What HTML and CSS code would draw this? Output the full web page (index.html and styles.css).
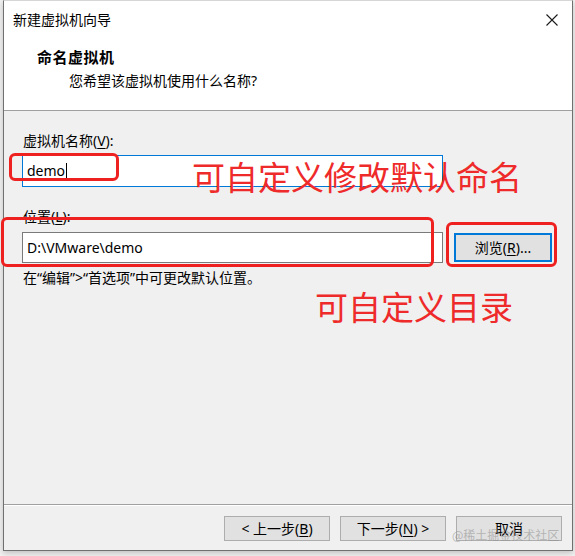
FILE: index.html
```html
<!DOCTYPE html>
<html lang="zh-CN">
<head>
<meta charset="utf-8">
<title>新建虚拟机向导</title>
<link rel="stylesheet" href="styles.css">
</head>
<body>
<div class="screen">
  <div class="window">
    <div class="top">
      <div class="titlebar">
        <span class="title">新建虚拟机向导</span>
        <svg class="close" width="12" height="12" viewBox="0 0 12 12"><path d="M0.5 0.5 L11.5 11.5 M11.5 0.5 L0.5 11.5" stroke="#1a1a1a" stroke-width="1.1" fill="none"/></svg>
      </div>
      <div class="header">
        <div class="h-title">命名虚拟机</div>
        <div class="h-sub">您希望该虚拟机使用什么名称?</div>
      </div>
    </div>
    <div class="content">
      <div class="label">虚拟机名称(<u>V</u>):</div>
      <div class="input focused"><span>demo</span><span class="caret"></span></div>
      <div class="label label2">位置(<u>L</u>):</div>
      <div class="row">
        <div class="input path"><span>D:\VMware\demo</span></div>
        <div class="btn browse">浏览(<u>R</u>)...</div>
      </div>
      <div class="hint">在“编辑”&gt;“首选项”中可更改默认位置。</div>
    </div>
    <div class="footer">
      <div class="btn">&lt; 上一步(<u>B</u>)</div>
      <div class="btn">下一步(<u>N</u>) &gt;</div>
      <div class="btn">取消</div>
    </div>
  </div>

  <div class="mark box1"></div>
  <div class="mark box2"></div>
  <div class="mark box3"></div>
  <div class="note note1">可自定义修改默认命名</div>
  <div class="note note2">可自定义目录</div>
  <div class="watermark">@稀土掘金技术社区</div>
</div>
</body>
</html>
```

FILE: styles.css
```css
html, body {
  margin: 0;
  padding: 0;
}
body {
  background: #f2f2f2;
  font-family: "Noto Sans", "Noto Sans CJK SC", sans-serif;
  font-size: 14px;
  color: #000;
}
.screen {
  position: relative;
  width: 575px;
  height: 556px;
  overflow: hidden;
}
.window {
  margin-left: 3px;
  width: 570px;
  height: 551px;
  box-sizing: border-box;
  border: 1px solid #707070;
  border-top: 1px solid #d6d6d6;
  background: #f0f0f0;
  display: flex;
  flex-direction: column;
  box-shadow: 0 2px 6px rgba(0, 0, 0, 0.22);
}
.top {
  background: #fff;
  border-bottom: 1px solid #a0a0a0;
}
.titlebar {
  height: 37px;
  display: flex;
  align-items: center;
  justify-content: space-between;
  padding: 0 14px 0 9px;
}
.title {
  line-height: 20px;
}
.close {
  display: block;
}
.header {
  padding: 9px 0 19px 33px;
}
.h-title {
  font-weight: bold;
  font-size: 15px;
  line-height: 20px;
  letter-spacing: 0.5px;
}
.h-sub {
  margin-top: 4px;
  padding-left: 32px;
  line-height: 20px;
}
.content {
  flex: 1;
  padding: 20px 0 0 18px;
}
.label {
  line-height: 20px;
  padding-left: 1px;
}
.label2 {
  margin-top: 20px;
}
.input {
  margin-top: 4px;
  width: 421px;
  height: 32px;
  box-sizing: border-box;
  border: 1px solid #7a7a7a;
  background: #fff;
  display: flex;
  align-items: center;
  padding-left: 4px;
  line-height: 20px;
}
.input.focused {
  border-color: #0078d7;
}
.caret {
  display: inline-block;
  width: 1px;
  height: 17px;
  background: #000;
  margin-left: 1px;
}
.row {
  margin-top: 5px;
  display: flex;
  align-items: center;
  gap: 11px;
}
.row .input {
  margin-top: 0;
  height: 31px;
}
.btn {
  width: 106px;
  height: 25px;
  box-sizing: border-box;
  border: 1px solid #adadad;
  background: #e1e1e1;
  display: flex;
  align-items: center;
  justify-content: center;
  line-height: 20px;
}
.btn.browse {
  width: 98px;
  height: 29px;
  border: 2px solid #0078d7;
}
.hint {
  margin-top: 5px;
  line-height: 20px;
  padding-left: 1px;
}
.footer {
  border-top: 1px solid #a0a0a0;
  box-shadow: inset 0 1px 0 #ffffff;
  padding: 11px 10px 0 0;
  height: 46px;
  box-sizing: border-box;
  display: flex;
  justify-content: flex-end;
  align-items: flex-start;
  gap: 10px;
}
u {
  text-decoration-thickness: 1px;
  text-underline-offset: 2px;
}

/* annotations lying over the dialog */
.mark {
  position: absolute;
  box-sizing: border-box;
  border: 3px solid #ee2020;
  border-radius: 6px;
}
.box1 { left: 9px; top: 153px; width: 110px; height: 28px; }
.box2 { left: 1px; top: 217px; width: 433px; height: 50px; }
.box3 { left: 446px; top: 222px; width: 111px; height: 45px; }
.note {
  position: absolute;
  color: #ee2a2a;
  font-family: "Noto Sans CJK SC", sans-serif;
  font-size: 33px;
  line-height: 33px;
  white-space: nowrap;
}
.note1 { left: 192px; top: 160px; }
.note2 { left: 315px; top: 290px; }
.watermark {
  position: absolute;
  left: 452px;
  top: 527px;
  font-family: "Noto Sans CJK SC", sans-serif;
  font-size: 12px;
  line-height: 16px;
  color: rgba(140, 140, 140, 0.55);
  white-space: nowrap;
}
```
